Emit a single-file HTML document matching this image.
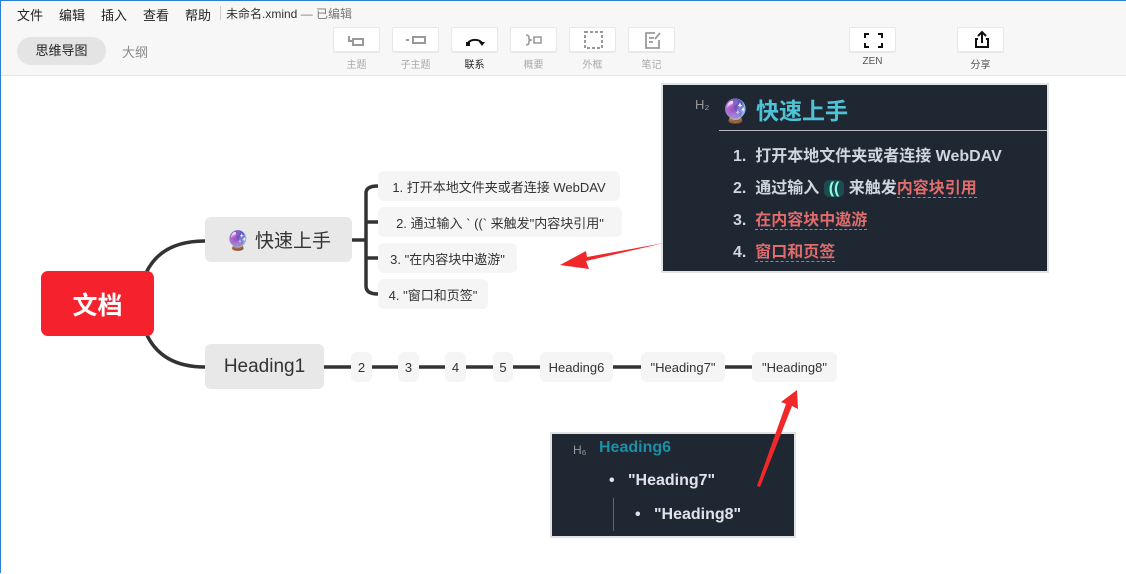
<!DOCTYPE html>
<html><head><meta charset="utf-8"><style>
*{margin:0;padding:0;box-sizing:border-box}
body{width:1126px;height:573px;overflow:hidden;background:#fff;font-family:"Liberation Sans","Noto Sans CJK SC",sans-serif;position:relative;border-top:1px solid #2b7fd6;border-left:1px solid #2b7fd6}
.a{position:absolute}
#top{left:0;top:0;width:1126px;height:75px;background:#f7f7f7;border-bottom:1px solid #e4e4e4}
.menu{font-size:13px;color:#222;top:4px}
.btn{width:47px;height:25px;top:26px;background:#fff;border:1px solid #e8e8e8;border-radius:2px;box-shadow:0 1px 1px rgba(0,0,0,.06)}
.bl{font-size:10px;color:#aaa;top:55px;width:47px;text-align:center}
.node{background:#f5f5f5;border-radius:6px;font-size:13px;color:#333;display:flex;align-items:center;justify-content:center}
.dark{background:#1f2733;box-shadow:0 0 0 2px #e2e2e2}
.ul{border-bottom:1px dashed #d66}
</style></head><body>
<div class="a" id="top"></div>
<div class="a menu" style="left:16px">文件</div>
<div class="a menu" style="left:58px">编辑</div>
<div class="a menu" style="left:100px">插入</div>
<div class="a menu" style="left:142px">查看</div>
<div class="a menu" style="left:184px">帮助</div>
<div class="a" style="left:219px;top:5px;width:1px;height:14px;background:#ccc"></div>
<div class="a menu" style="left:225px;font-size:12px;color:#333">未命名.xmind <span style="color:#777">— 已编辑</span></div>
<div class="a" style="left:16px;top:36px;width:89px;height:28px;border-radius:14px;background:#e4e4e4;font-size:13px;color:#222;text-align:center;line-height:28px">思维导图</div>
<div class="a" style="left:121px;top:41px;font-size:13px;color:#888">大纲</div>

<div class="a btn" style="left:332px"><svg width="47" height="25"><path d="M15 8v5h3M19 11h10v6h-10z" fill="none" stroke="#999" stroke-width="2"/></svg></div>
<div class="a btn" style="left:391px"><svg width="47" height="25"><path d="M13 12h3M20 9h12v6h-12z" fill="none" stroke="#999" stroke-width="2"/></svg></div>
<div class="a btn" style="left:450px"><svg width="47" height="25"><path d="M16 15a8 6 0 0 1 14 0" fill="none" stroke="#111" stroke-width="2"/><path d="M14 14h4v4h-4zM27 14l3 4 3-4z" fill="#111"/></svg></div>
<div class="a btn" style="left:509px"><svg width="47" height="25"><path d="M15 7q3 0 3 3v1l2 1-2 1v1q0 3-3 3M23 9h7v6h-7z" fill="none" stroke="#999" stroke-width="1.6"/></svg></div>
<div class="a btn" style="left:568px"><svg width="47" height="25"><rect x="15" y="4" width="17" height="16" fill="none" stroke="#999" stroke-width="2" stroke-dasharray="3 2"/></svg></div>
<div class="a btn" style="left:627px"><svg width="47" height="25"><path d="M26 5h-9v15h13v-8M20 10h5M20 14h4M31 5l-5 6" fill="none" stroke="#999" stroke-width="1.8"/></svg></div>
<div class="a bl" style="left:332px">主题</div>
<div class="a bl" style="left:391px">子主题</div>
<div class="a bl" style="left:450px;color:#222">联系</div>
<div class="a bl" style="left:509px">概要</div>
<div class="a bl" style="left:568px">外框</div>
<div class="a bl" style="left:627px">笔记</div>
<div class="a btn" style="left:848px"><svg width="47" height="25"><path d="M15 10V6h4M28 6h4v4M32 15v4h-4M19 19h-4v-4" fill="none" stroke="#111" stroke-width="2"/></svg></div>
<div class="a btn" style="left:956px"><svg width="47" height="25"><path d="M20 11h-2v8h12v-8h-2M24 15V4M20 8l4-4 4 4" fill="none" stroke="#111" stroke-width="2"/></svg></div>
<div class="a bl" style="left:848px;color:#555">ZEN</div>
<div class="a bl" style="left:956px;color:#555">分享</div>

<svg class="a" style="left:0;top:0" width="1126" height="573">
<g fill="none" stroke="#333" stroke-width="3.5">
<path d="M145 272 Q160 240 204 240"/>
<path d="M145 332 Q160 366 204 366"/>
<path d="M351 239 h14 M365 192 V285 M365 192 Q365 185 377 185 M365 221h12 M365 257h12 M365 285 Q365 293 377 293"/>
<path d="M323 366H350M371 366H397M418 366H444M465 366H492M512 366H539M612 366H640M724 366H751"/>
</g>
</svg>
<div class="a" style="left:40px;top:270px;width:113px;height:65px;background:#f5222d;border-radius:7px;color:#fff;font-size:25px;font-weight:bold;display:flex;align-items:center;justify-content:center">文档</div>
<div class="a node" style="left:204px;top:216px;width:147px;height:45px;background:#e8e8e8;font-size:19px">🔮&nbsp;快速上手</div>
<div class="a node" style="left:204px;top:343px;width:119px;height:45px;background:#e8e8e8;font-size:19px">Heading1</div>
<div class="a node" style="left:377px;top:170px;width:242px;height:30px">1. 打开本地文件夹或者连接 WebDAV</div>
<div class="a node" style="left:377px;top:206px;width:244px;height:30px">2. 通过输入 ` ((` 来触发"内容块引用"</div>
<div class="a node" style="left:377px;top:242px;width:139px;height:30px">3. "在内容块中遨游"</div>
<div class="a node" style="left:377px;top:278px;width:110px;height:30px">4. "窗口和页签"</div>
<div class="a node" style="left:350px;top:351px;width:21px;height:30px">2</div>
<div class="a node" style="left:397px;top:351px;width:21px;height:30px">3</div>
<div class="a node" style="left:444px;top:351px;width:21px;height:30px">4</div>
<div class="a node" style="left:492px;top:351px;width:20px;height:30px">5</div>
<div class="a node" style="left:539px;top:351px;width:73px;height:30px">Heading6</div>
<div class="a node" style="left:640px;top:351px;width:84px;height:30px">"Heading7"</div>
<div class="a node" style="left:751px;top:351px;width:85px;height:30px">"Heading8"</div>

<div class="a dark" style="left:662px;top:84px;width:384px;height:186px;color:#cfd6de;font-weight:bold">
<div class="a" style="left:32px;top:12px;font-size:13px;font-weight:normal;color:#999">H₂</div>
<div class="a" style="left:58px;top:7px;font-size:23px;color:#4fc3d6">🔮 快速上手</div>
<div class="a" style="left:56px;top:45px;width:328px;height:1px;background:#bbb"></div>
<div class="a" style="left:70px;top:57px;font-size:16px">1.&nbsp; 打开本地文件夹或者连接 WebDAV</div>
<div class="a" style="left:70px;top:89px;font-size:16px">2.&nbsp; 通过输入 <span style="background:#1e4a52;border-radius:5px;padding:0 5px;color:#8fd">((</span> 来触发<span class="ul" style="color:#e06c6c">内容块引用</span></div>
<div class="a" style="left:70px;top:121px;font-size:16px">3.&nbsp; <span class="ul" style="color:#e06c6c">在内容块中遨游</span></div>
<div class="a" style="left:70px;top:153px;font-size:16px">4.&nbsp; <span class="ul" style="color:#e06c6c">窗口和页签</span></div>
</div>
<div class="a dark" style="left:551px;top:433px;width:242px;height:102px;color:#e0e4ea;font-weight:bold">
<div class="a" style="left:21px;top:9px;font-size:12px;font-weight:normal;color:#999">H₆</div>
<div class="a" style="left:47px;top:5px;font-size:16px;color:#1a8fa5">Heading6</div>
<div class="a" style="left:57px;top:38px;font-size:16px">•&nbsp;&nbsp; "Heading7"</div>
<div class="a" style="left:61px;top:64px;width:1px;height:33px;background:#666"></div>
<div class="a" style="left:83px;top:72px;font-size:16px">•&nbsp;&nbsp; "Heading8"</div>
</div>
<svg class="a" style="left:0;top:0" width="1126" height="573">
<path d="M663 242 L585 260 L588 268 L559 264 L585 250 L586 256 Z" fill="#f0282a"/>
<path d="M756 485 L785 403 L780 401 L796 389 L797 408 L791 405 L759 486 Z" fill="#f0282a"/>
</svg>
</body></html>
